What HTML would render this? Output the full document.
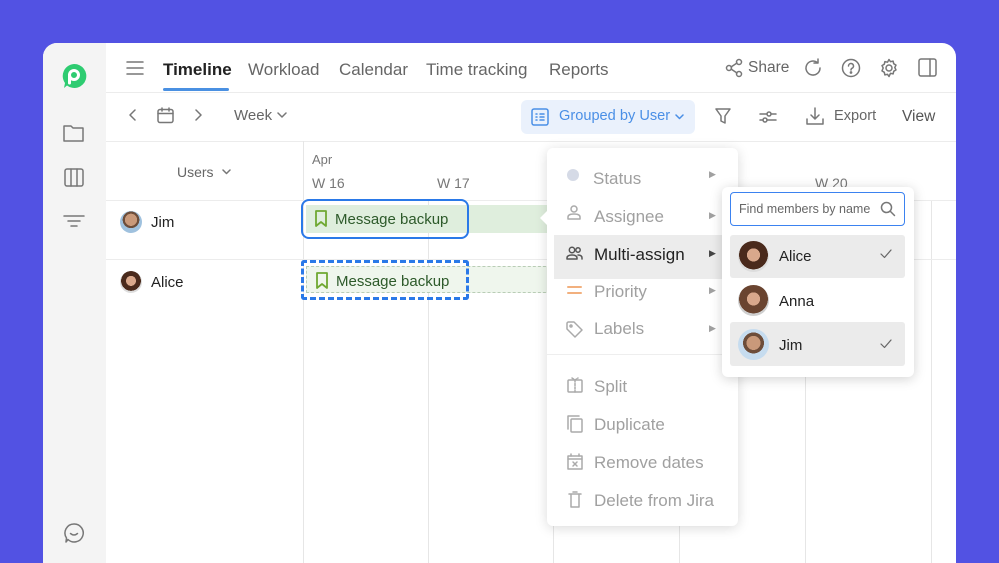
<!DOCTYPE html>
<html><head><meta charset="utf-8"><style>
*{box-sizing:border-box;margin:0;padding:0}
html{width:999px;height:563px;overflow:hidden}
body{width:999px;height:563px;background:#5252e3;position:relative;overflow:hidden;font-family:"Liberation Sans",sans-serif;color:#333}
.card{position:absolute;left:43px;top:43px;width:913px;height:520px;background:#fff;border-radius:14px 14px 0 0;overflow:hidden}
.side{position:absolute;left:0;top:0;width:63px;height:100%;background:#f4f4f4}
.abs{position:absolute}
.tab{position:absolute;top:17px;font-size:17px;color:#666}
.hl{position:absolute;background:#ececec}
.vl{position:absolute;top:98px;width:1px;height:430px;background:#e6e6e6}
svg{position:absolute;fill:none;stroke:#777;stroke-width:1.5;stroke-linecap:round;stroke-linejoin:round}
.mi{position:absolute;font-size:17px;color:#a0a0a0}
.av{position:absolute;border-radius:50%}
</style></head><body>
<div class="card">
 <div class="side"></div>
 <svg style="left:18px;top:20px" width="26" height="26" viewBox="0 0 26 26"><path d="M13 1a12 12 0 1 1-7 21.5L3 25l1-5A12 12 0 0 1 13 1z" fill="#2ecc71" stroke="none"/><circle cx="13" cy="12" r="4.5" fill="none" stroke="#fff" stroke-width="3"/><path d="M8.5 12v8" stroke="#fff" stroke-width="3"/></svg>
 <svg style="left:20px;top:80px" width="22" height="20" viewBox="0 0 22 20"><path d="M1 3h7l2 2h10v13H1z"/></svg>
 <svg style="left:21px;top:125px" width="20" height="20" viewBox="0 0 20 20"><rect x="1" y="1" width="18" height="17" rx="2"/><path d="M7 1v17M13 1v17"/></svg>
 <svg style="left:20px;top:171px" width="22" height="14" viewBox="0 0 22 14"><path d="M1 2h20M5 7h12M8 12h6"/></svg>
 <svg style="left:20px;top:479px" width="22" height="22" viewBox="0 0 22 22"><path d="M11 2a9 9 0 1 1-6 15.5L3 20l.5-4A9 9 0 0 1 11 2z"/><path d="M7.5 11.5q3.5 3 7 0"/></svg>

 <svg style="left:83px;top:18px" width="18" height="14" viewBox="0 0 18 14"><path d="M1 1h16M1 7h16M1 13h16"/></svg>
 <div class="tab" style="left:120px;color:#222;font-weight:bold">Timeline</div>
 <div class="abs" style="left:120px;top:45px;width:66px;height:3px;background:#4a90e2;border-radius:2px"></div>
 <div class="tab" style="left:205px">Workload</div>
 <div class="tab" style="left:296px">Calendar</div>
 <div class="tab" style="left:383px">Time tracking</div>
 <div class="tab" style="left:506px">Reports</div>
 <svg style="left:682px;top:15px" width="18" height="20" viewBox="0 0 18 20"><circle cx="14" cy="4" r="2.5"/><circle cx="4" cy="10" r="2.5"/><circle cx="14" cy="16" r="2.5"/><path d="M6 9l6-4M6 11l6 4"/></svg>
 <div class="abs" style="left:705px;top:16px;font-size:15.5px;color:#666">Share</div>
 <svg style="left:760px;top:15px" width="20" height="20" viewBox="0 0 20 20"><path d="M17 10a7 7 0 1 1-3-5.7"/><path d="M15 1v4h-4"/></svg>
 <svg style="left:798px;top:15px" width="20" height="20" viewBox="0 0 20 20"><circle cx="10" cy="10" r="8.5"/><path d="M7.5 8a2.5 2.5 0 1 1 3.5 2.3c-.8.4-1 .9-1 1.7"/><circle cx="10" cy="14.5" r=".6" fill="#777"/></svg>
 <svg style="left:836px;top:15px" width="20" height="20" viewBox="0 0 20 20"><circle cx="10" cy="10" r="3"/><path d="M10 1.5l1.5 2.2 2.6-.6.6 2.6 2.3 1.4-1.2 2.4 1.2 2.4-2.3 1.4-.6 2.6-2.6-.6L10 18.5l-1.5-2.2-2.6.6-.6-2.6-2.3-1.4L4.2 10 3 7.6l2.3-1.4.6-2.6 2.6.6z"/></svg>
 <svg style="left:875px;top:15px" width="20" height="20" viewBox="0 0 20 20"><rect x="1" y="1" width="17" height="17" rx="2"/><path d="M12 1v17"/></svg>
 <div class="hl" style="left:63px;top:49px;width:850px;height:1px"></div>

 <svg style="left:86px;top:66px" width="8" height="12" viewBox="0 0 8 12"><path d="M6 1L1 6l5 5"/></svg>
 <svg style="left:114px;top:64px" width="17" height="17" viewBox="0 0 17 17"><rect x="1" y="2.5" width="15" height="13" rx="2"/><path d="M1 6.5h15M5 1v3M12 1v3"/></svg>
 <svg style="left:151px;top:66px" width="8" height="12" viewBox="0 0 8 12"><path d="M2 1l5 5-5 5"/></svg>
 <div class="abs" style="left:191px;top:64px;font-size:15px;color:#666">Week</div>
 <svg style="left:234px;top:69px" width="10" height="6" viewBox="0 0 10 6"><path d="M1 1l4 4 4-4"/></svg>
 <div class="abs" style="left:478px;top:57px;width:174px;height:34px;background:#eaf1fc;border-radius:6px"></div>
 <svg style="left:488px;top:65px;stroke:#4a8fe6" width="18" height="18" viewBox="0 0 18 18"><rect x="1" y="1" width="16" height="16" rx="2"/><path d="M5 6h1M9 6h4M5 9h1M9 9h4M5 12h1M9 12h4"/></svg>
 <div class="abs" style="left:516px;top:65px;font-size:14.6px;color:#4a8fe6">Grouped by User</div>
 <svg style="left:632px;top:71px;stroke:#4a8fe6" width="9" height="6" viewBox="0 0 9 6"><path d="M1 1l3.5 3.5L8 1"/></svg>
 <svg style="left:672px;top:65px" width="16" height="17" viewBox="0 0 16 17"><path d="M1 1h14l-5 7v7l-4-2V8z"/></svg>
 <svg style="left:716px;top:66px" width="18" height="16" viewBox="0 0 18 16"><path d="M1 5h7M12 5h5M1 11h3M8 11h9"/><circle cx="10" cy="5" r="2"/><circle cx="6" cy="11" r="2"/></svg>
 <svg style="left:763px;top:64px" width="18" height="18" viewBox="0 0 18 18"><path d="M9 1v11M5 8l4 4 4-4M1 12v5h16v-5"/></svg>
 <div class="abs" style="left:791px;top:65px;font-size:14.6px;color:#666">Export</div>
 <div class="abs" style="left:859px;top:65px;font-size:15.5px;color:#555">View</div>
 <div class="hl" style="left:63px;top:98px;width:850px;height:1px"></div>

 <div class="vl" style="left:260px"></div>
 <div class="vl" style="left:385px;top:157px"></div>
 <div class="vl" style="left:510px;top:157px"></div>
 <div class="vl" style="left:636px;top:157px"></div>
 <div class="vl" style="left:762px;top:157px"></div>
 <div class="vl" style="left:888px;top:157px"></div>
 <div class="hl" style="left:63px;top:157px;width:850px;height:1px"></div>
 <div class="hl" style="left:63px;top:216px;width:850px;height:1px"></div>
 <div class="abs" style="left:134px;top:121px;font-size:14px;color:#666">Users</div>
 <svg style="left:179px;top:126px" width="9" height="6" viewBox="0 0 9 6"><path d="M1 1l3.5 3.5L8 1"/></svg>
 <div class="abs" style="left:269px;top:109px;font-size:13px;color:#777">Apr</div>
 <div class="abs" style="left:269px;top:132px;font-size:14px;color:#777">W 16</div>
 <div class="abs" style="left:394px;top:132px;font-size:14px;color:#777">W 17</div>
 <div class="abs" style="left:772px;top:132px;font-size:14px;color:#777">W 20</div>

 <div class="av" style="left:77px;top:168px;width:22px;height:22px;background:radial-gradient(circle at 50% 40%,#c9997a 0 35%,#6d4d3a 36% 48%,#9fc1de 49%)"></div>
 <div class="abs" style="left:108px;top:171px;font-size:15px;color:#222">Jim</div>
 <div class="av" style="left:77px;top:228px;width:22px;height:22px;background:radial-gradient(circle at 50% 45%,#d9a88c 0 30%,#4a2a1c 31% 60%,#ddd 61%)"></div>
 <div class="abs" style="left:108px;top:231px;font-size:15px;color:#222">Alice</div>

 <div class="abs" style="left:263px;top:162px;width:250px;height:28px;background:#dfeedd"></div>
 <div class="abs" style="left:258px;top:156px;width:168px;height:40px;border:2.5px solid #2a79e8;border-radius:8px"></div>
 <svg style="left:272px;top:167px;stroke:#6fa832;stroke-width:1.8" width="12" height="17" viewBox="0 0 12 17"><path d="M1 1h10v15l-5-4-5 4z"/></svg>
 <div class="abs" style="left:292px;top:168px;font-size:15px;color:#2d5a2a">Message backup</div>
 <div class="abs" style="left:263px;top:223px;width:250px;height:27px;background:#eff6ed;border:1px dashed #b9cdb6"></div>
 <div class="abs" style="left:258px;top:217px;width:168px;height:40px;border:3px dashed #2a79e8;border-radius:3px"></div>
 <svg style="left:273px;top:229px;stroke:#6fa832;stroke-width:1.8" width="12" height="17" viewBox="0 0 12 17"><path d="M1 1h10v15l-5-4-5 4z"/></svg>
 <div class="abs" style="left:293px;top:230px;font-size:15px;color:#2d5a2a">Message backup</div>

 <div class="abs" style="left:504px;top:105px;width:191px;height:378px;background:#fff;border-radius:6px;box-shadow:0 2px 12px rgba(0,0,0,.15)"></div>
 <div class="abs" style="left:497px;top:168px;width:0;height:0;border:7px solid transparent;border-right-color:#fff;border-left:0"></div>
 <div class="abs" style="left:511px;top:192px;width:170px;height:44px;background:#ececec"></div>
 <div class="abs" style="left:504px;top:311px;width:191px;height:1px;background:#eee"></div>
 <div class="av" style="left:524px;top:126px;width:12px;height:12px;background:#d5dae6"></div>
 <div class="mi" style="left:550px;top:126px">Status</div>
 <svg style="left:524px;top:162px;stroke:#aaa" width="14" height="15" viewBox="0 0 14 15"><circle cx="7" cy="4" r="3"/><path d="M1 14v-2q0-3 6-3t6 3v2z"/></svg>
 <div class="mi" style="left:551px;top:164px">Assignee</div>
 <svg style="left:523px;top:203px;stroke:#555" width="17" height="15" viewBox="0 0 17 15"><circle cx="6" cy="4" r="2.7"/><circle cx="12" cy="4" r="2.2"/><path d="M1 13v-1q0-3 5-3t5 3v1zM12 9q4 0 4 3v1"/></svg>
 <div class="mi" style="left:551px;top:202px;color:#222">Multi-assign</div>
 <svg style="left:524px;top:242px;stroke:#f2b07e;stroke-width:2" width="15" height="10" viewBox="0 0 15 10"><path d="M1 2h13M1 8h13"/></svg>
 <div class="mi" style="left:551px;top:239px">Priority</div>
 <svg style="left:523px;top:278px;stroke:#aaa" width="17" height="17" viewBox="0 0 17 17"><path d="M1 2v6l8 8 7-7-8-8H2z"/><circle cx="5" cy="5" r="1"/></svg>
 <div class="mi" style="left:551px;top:276px">Labels</div>
 <div class="mi" style="left:666px;top:126px;font-size:9px">▶</div>
 <div class="mi" style="left:666px;top:167px;font-size:9px">▶</div>
 <div class="mi" style="left:666px;top:205px;font-size:9px;color:#444">▶</div>
 <div class="mi" style="left:666px;top:242px;font-size:9px">▶</div>
 <div class="mi" style="left:666px;top:280px;font-size:9px">▶</div>
 <svg style="left:524px;top:334px;stroke:#aaa" width="16" height="16" viewBox="0 0 16 16"><rect x="1" y="3" width="14" height="12" rx="1"/><path d="M8 3v12M5 1l3 2 3-2" stroke-dasharray="2 1.5"/></svg>
 <div class="mi" style="left:551px;top:334px">Split</div>
 <svg style="left:524px;top:372px;stroke:#aaa" width="16" height="18" viewBox="0 0 16 18"><path d="M1 14V1h11"/><rect x="4" y="4" width="11" height="13" rx="1"/></svg>
 <div class="mi" style="left:551px;top:372px">Duplicate</div>
 <svg style="left:524px;top:410px;stroke:#aaa" width="16" height="17" viewBox="0 0 16 17"><rect x="1" y="3" width="14" height="13"/><path d="M1 6h14M4 1v2M12 1v2M6 9l4 4M10 9l-4 4"/></svg>
 <div class="mi" style="left:551px;top:410px">Remove dates</div>
 <svg style="left:525px;top:448px;stroke:#aaa" width="14" height="17" viewBox="0 0 14 17"><path d="M1 3h12M5 1h4M3 3v13h8V3"/></svg>
 <div class="mi" style="left:551px;top:448px">Delete from Jira</div>

 <div class="abs" style="left:679px;top:144px;width:192px;height:190px;background:#fff;border-radius:6px;box-shadow:0 2px 12px rgba(0,0,0,.18)"></div>
 <div class="abs" style="left:687px;top:149px;width:175px;height:34px;border:1.5px solid #3b82f0;border-radius:4px"></div>
 <div class="abs" style="left:696px;top:159px;font-size:12.5px;color:#666">Find members by name</div>
 <svg style="left:837px;top:158px" width="16" height="16" viewBox="0 0 16 16"><circle cx="6.5" cy="6.5" r="5"/><path d="M10.5 10.5l4 4"/></svg>
 <div class="abs" style="left:687px;top:192px;width:175px;height:43px;background:#ebebeb;border-radius:3px"></div>
 <div class="abs" style="left:687px;top:279px;width:175px;height:44px;background:#ebebeb;border-radius:3px"></div>
 <div class="av" style="left:695px;top:198px;width:31px;height:31px;background:radial-gradient(circle at 50% 45%,#d9a88c 0 28%,#4a2a1c 29% 62%,#ddd 63%)"></div>
 <div class="av" style="left:695px;top:242px;width:31px;height:31px;background:radial-gradient(circle at 50% 45%,#d9a88c 0 28%,#6a4430 29% 62%,#cfcfcf 63%)"></div>
 <div class="av" style="left:695px;top:286px;width:31px;height:31px;background:radial-gradient(circle at 50% 45%,#c9997a 0 30%,#6d4d3a 31% 45%,#c6dcef 46%)"></div>
 <div class="abs" style="left:736px;top:205px;font-size:15px;color:#222">Alice</div>
 <div class="abs" style="left:736px;top:250px;font-size:15px;color:#222">Anna</div>
 <div class="abs" style="left:736px;top:294px;font-size:15px;color:#222">Jim</div>
 <svg style="left:837px;top:206px;stroke:#666;stroke-width:1.2" width="12" height="10" viewBox="0 0 12 10"><path d="M1 5l3.5 3.5L11 1"/></svg>
 <svg style="left:837px;top:296px;stroke:#666;stroke-width:1.2" width="12" height="10" viewBox="0 0 12 10"><path d="M1 5l3.5 3.5L11 1"/></svg>
</div>
</body></html>
